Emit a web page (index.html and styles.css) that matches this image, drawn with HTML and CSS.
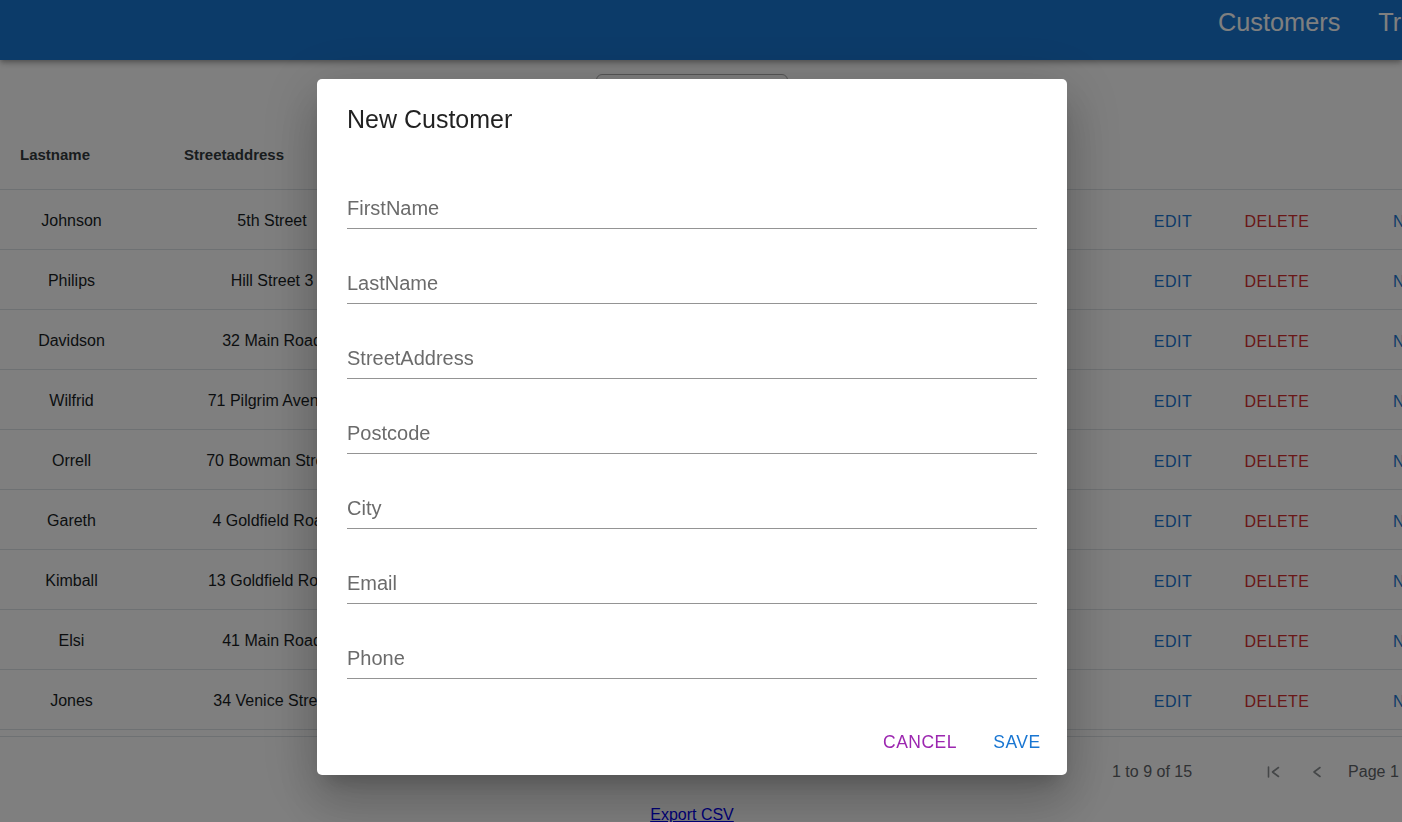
FILE: index.html
```html
<!DOCTYPE html>
<html lang="en">
<head>
<meta charset="utf-8">
<title>Customers</title>
<link rel="stylesheet" href="styles.css">
</head>
<body>
<header class="appbar">
  <nav class="nav">
    <span class="nav-link">Customers</span>
    <span class="nav-link">Trainings</span>
  </nav>
</header>

<main class="page">
  <div class="toolbar">
    <div class="search-box"></div>
  </div>

  <section class="grid">
    <div class="grid-row grid-head">
      <div class="hcell">Lastname</div>
      <div class="hcell">Streetaddress</div>
      <div class="hcell"></div>
      <div class="hcell"></div>
      <div class="hcell"></div>
      <div class="hcell"></div>
    </div>
    <div class="grid-body">
      <div class="grid-row"><div class="cell c-last">Johnson</div><div class="cell c-street">5th Street</div><div class="cell"></div><div class="cell c-edit">EDIT</div><div class="cell c-del">DELETE</div><div class="cell c-new">NEW TRAINING</div></div>
      <div class="grid-row"><div class="cell c-last">Philips</div><div class="cell c-street">Hill Street 3</div><div class="cell"></div><div class="cell c-edit">EDIT</div><div class="cell c-del">DELETE</div><div class="cell c-new">NEW TRAINING</div></div>
      <div class="grid-row"><div class="cell c-last">Davidson</div><div class="cell c-street">32 Main Road</div><div class="cell"></div><div class="cell c-edit">EDIT</div><div class="cell c-del">DELETE</div><div class="cell c-new">NEW TRAINING</div></div>
      <div class="grid-row"><div class="cell c-last">Wilfrid</div><div class="cell c-street">71 Pilgrim Avenue</div><div class="cell"></div><div class="cell c-edit">EDIT</div><div class="cell c-del">DELETE</div><div class="cell c-new">NEW TRAINING</div></div>
      <div class="grid-row"><div class="cell c-last">Orrell</div><div class="cell c-street">70 Bowman Street</div><div class="cell"></div><div class="cell c-edit">EDIT</div><div class="cell c-del">DELETE</div><div class="cell c-new">NEW TRAINING</div></div>
      <div class="grid-row"><div class="cell c-last">Gareth</div><div class="cell c-street">4 Goldfield Road</div><div class="cell"></div><div class="cell c-edit">EDIT</div><div class="cell c-del">DELETE</div><div class="cell c-new">NEW TRAINING</div></div>
      <div class="grid-row"><div class="cell c-last">Kimball</div><div class="cell c-street">13 Goldfield Road</div><div class="cell"></div><div class="cell c-edit">EDIT</div><div class="cell c-del">DELETE</div><div class="cell c-new">NEW TRAINING</div></div>
      <div class="grid-row"><div class="cell c-last">Elsi</div><div class="cell c-street">41 Main Road</div><div class="cell"></div><div class="cell c-edit">EDIT</div><div class="cell c-del">DELETE</div><div class="cell c-new">NEW TRAINING</div></div>
      <div class="grid-row"><div class="cell c-last">Jones</div><div class="cell c-street">34 Venice Street</div><div class="cell"></div><div class="cell c-edit">EDIT</div><div class="cell c-del">DELETE</div><div class="cell c-new">NEW TRAINING</div></div>
    </div>
    <div class="pager">
      <span class="pager-summary">1 to 9 of 15</span>
      <span class="pager-icon first">
        <svg width="16" height="16" viewBox="0 0 16 16" fill="none" stroke="currentColor" stroke-width="1.6" stroke-linecap="round" stroke-linejoin="round"><path d="M2.5 3v10"/><path d="M12.5 3.5l-6 4.5 6 4.5"/></svg>
      </span>
      <span class="pager-icon prev">
        <svg width="16" height="16" viewBox="0 0 16 16" fill="none" stroke="currentColor" stroke-width="1.6" stroke-linecap="round" stroke-linejoin="round"><path d="M11 3.5l-6 4.5 6 4.5"/></svg>
      </span>
      <span class="pager-text">Page 1 of 2</span>
    </div>
  </section>

  <div class="export"><a class="export-link" href="#">Export CSV</a></div>
</main>

<div class="backdrop">
  <div class="dialog" role="dialog">
    <h2 class="dialog-title">New Customer</h2>
    <div class="dialog-content">
      <div class="field"><span class="field-label">FirstName</span></div>
      <div class="field"><span class="field-label">LastName</span></div>
      <div class="field"><span class="field-label">StreetAddress</span></div>
      <div class="field"><span class="field-label">Postcode</span></div>
      <div class="field"><span class="field-label">City</span></div>
      <div class="field"><span class="field-label">Email</span></div>
      <div class="field"><span class="field-label">Phone</span></div>
    </div>
    <div class="dialog-actions">
      <span class="btn btn-cancel">CANCEL</span>
      <span class="btn btn-save">SAVE</span>
    </div>
  </div>
</div>
</body>
</html>
```

FILE: styles.css
```css
* { box-sizing: border-box; }

html, body {
  margin: 0;
  padding: 0;
}

body {
  width: 1402px;
  height: 822px;
  overflow: hidden;
  background: #ffffff;
  font-family: "Liberation Sans", Arial, sans-serif;
  color: #181d1f;
  position: relative;
}

/* App bar */
.appbar {
  height: 60px;
  background: #1976d2;
  box-shadow: 0 2px 4px -1px rgba(0,0,0,0.2), 0 4px 5px 0 rgba(0,0,0,0.14), 0 1px 10px 0 rgba(0,0,0,0.12);
  display: flex;
  padding-left: 1218px;
  position: relative;
  z-index: 1;
  white-space: nowrap;
}

.nav {
  display: flex;
  gap: 38px;
  padding-top: 7px;
}

.nav-link {
  font-size: 25.3px;
  line-height: 30px;
  color: #ffffff;
}

/* Page */
.page {
  width: 1402px;
}

.toolbar {
  width: 1384px;
  display: flex;
  justify-content: center;
  padding-top: 14px;
  margin-bottom: 6px;
}

.search-box {
  width: 192px;
  height: 38px;
  border: 1px solid #a9a9a9;
  border-radius: 6px;
  background: #fafafa;
}

/* Grid */
.grid {
  width: 1402px;
  overflow: hidden;
}

.grid-row {
  display: grid;
  grid-template-columns: 164px 216px 741px 104px 104px 200px;
  height: 60px;
  border-bottom: 1px solid #dde2e6;
  align-items: center;
  white-space: nowrap;
}

.grid-head {
  height: 72px;
}

.hcell {
  padding-left: 20px;
  font-size: 15px;
  font-weight: bold;
  color: #333a3d;
  padding-top: 2px;
}

.grid-body {
  padding-bottom: 6px;
  border-bottom: 1px solid #dde2e6;
}

.cell {
  font-size: 16px;
  text-align: center;
  overflow: visible;
  padding-top: 2px;
}

.c-last {
  padding-right: 21px;
}

.c-edit, .c-del, .c-new {
  letter-spacing: 0.46px;
  padding-top: 4px;
}

.c-edit { color: #1976d2; }
.c-del { color: #d32f2f; }
.c-new {
  color: #1976d2;
  text-align: left;
  padding-left: 64px;
}

.pager {
  height: 69px;
  display: flex;
  align-items: center;
  padding-left: 1112px;
  white-space: nowrap;
  font-size: 16px;
  color: #5f6468;
}

.pager-summary {
  margin-right: 74px;
}

.pager-icon {
  display: inline-flex;
  width: 16px;
  height: 16px;
  color: #8a8e91;
}

.pager-icon.first {
  margin-right: 27px;
}

.pager-icon.prev {
  margin-right: 23px;
}

.export {
  width: 1384px;
  text-align: center;
  font-size: 16px;
  line-height: 17px;
}

.export-link {
  color: #0000ee;
  text-decoration: underline;
}

/* Modal */
.backdrop {
  position: fixed;
  inset: 0;
  background: rgba(0,0,0,0.5);
  z-index: 10;
  display: flex;
  justify-content: center;
  align-items: flex-start;
  padding-top: 79px;
  padding-right: 18px;
}

.dialog {
  width: 750px;
  background: #ffffff;
  border-radius: 5px;
  box-shadow: 0 14px 19px -9px rgba(0,0,0,0.2), 0 30px 48px 4px rgba(0,0,0,0.14), 0 11px 58px 10px rgba(0,0,0,0.12);
  display: flex;
  flex-direction: column;
}

.dialog-title {
  margin: 0;
  padding: 20px 30px 20px;
  font-size: 25px;
  line-height: 40px;
  font-weight: normal;
  color: rgba(0,0,0,0.87);
}

.dialog-content {
  padding: 0 30px 30px;
  display: flex;
  flex-direction: column;
  gap: 5px;
}

.field {
  padding-top: 37px;
  padding-bottom: 8px;
  border-bottom: 1px solid #949494;
}

.field-label {
  display: block;
  font-size: 20px;
  line-height: 24px;
  color: #6b6b6b;
}

.dialog-actions {
  padding: 10px;
  display: flex;
  justify-content: flex-end;
  align-items: center;
  gap: 10px;
}

.btn {
  display: inline-flex;
  justify-content: center;
  align-items: center;
  min-width: 80px;
  height: 46px;
  padding: 0 10px;
  font-size: 17.5px;
  letter-spacing: 0.5px;
  border-radius: 5px;
}

.btn-cancel { color: #9c27b0; }
.btn-save { color: #1976d2; }
```
